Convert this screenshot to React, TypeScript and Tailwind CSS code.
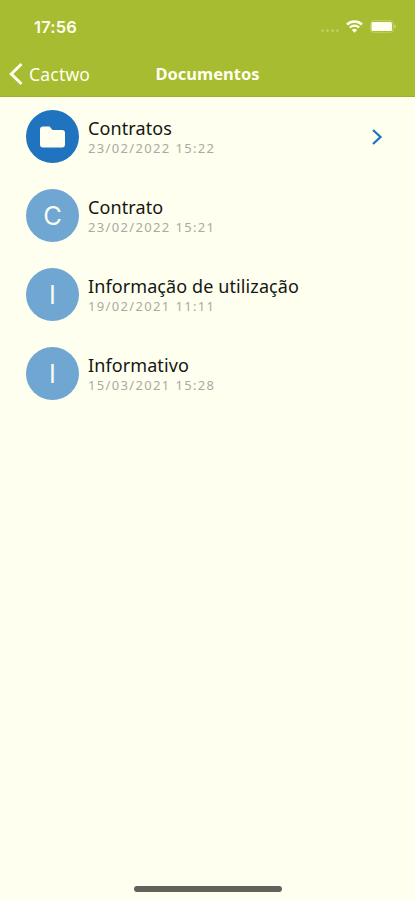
const documents = [
  { title: "Contratos", date: "23/02/2022 15:22", folder: true },
  { title: "Contrato", date: "23/02/2022 15:21", folder: false },
  { title: "Informação de utilização", date: "19/02/2021 11:11", folder: false },
  { title: "Informativo", date: "15/03/2021 15:28", folder: false },
];

function StatusBar() {
  return (
    <div className="flex h-[53px] items-center justify-between pl-[34px] pr-[18px] pt-px">
      <span className="font-['Inter',sans-serif] text-[16.5px] font-semibold leading-none tracking-[0.2px]">
        17:56
      </span>
      <div className="flex items-center pb-px">
        <div className="mr-[7px] mt-2 flex gap-[2px] opacity-25">
          <span className="h-[3px] w-[3px] rounded-full bg-[#fffff0]" />
          <span className="h-[3px] w-[3px] rounded-full bg-[#fffff0]" />
          <span className="h-[3px] w-[3px] rounded-full bg-[#fffff0]" />
          <span className="h-[3px] w-[3px] rounded-full bg-[#fffff0]" />
        </div>
        <svg width="17" height="13" viewBox="0 0 17 13" fill="none">
          <path d="M1 4.5a10.8 10.8 0 0 1 15 0" stroke="#fffff0" strokeWidth="2.6" />
          <path d="M3.8 7.5a6.8 6.8 0 0 1 9.4 0" stroke="#fffff0" strokeWidth="2.2" />
          <path d="M5.9 9.9a3.8 3.8 0 0 1 5.2 0L8.5 12.7Z" fill="#fffff0" />
        </svg>
        <svg className="ml-[7px]" width="27" height="13" viewBox="0 0 27 13" fill="none">
          <rect x="0.7" y="0.7" width="22.6" height="11.6" rx="3" stroke="#fffff0" strokeOpacity="0.3" />
          <rect x="1.5" y="2" width="20.5" height="9" rx="1.5" fill="#fffff0" />
          <path d="M24.5 4.5c2 .8 2 3.200 0 4Z" fill="#fffff0" fillOpacity="0.45" />
        </svg>
      </div>
    </div>
  );
}

export default function App() {
  return (
    <main className="flex h-[900px] w-[415px] flex-col overflow-hidden bg-[#fffff0] font-['Noto_Sans',sans-serif]">
      <header className="h-[97px] border-b border-[#9cb126] bg-[#a7bc30] text-[#fffff0]">
        <StatusBar />
        <nav className="grid h-[42px] grid-cols-[135px_145px_135px] items-center">
          <button className="flex items-center pl-[9px]">
            <svg width="14" height="24" viewBox="0 0 14 24" fill="none">
              <path d="M12.500 2 2.300 12l10.200 10" stroke="currentColor" strokeWidth="3" />
            </svg>
            <span className="ml-[6px] text-[17.5px] leading-6 tracking-[0.2px]">Cactwo</span>
          </button>
          <h1 className="text-center text-[16.5px] font-bold leading-6">Documentos</h1>
        </nav>
      </header>
      <ul className="flex-1">
        {documents.map((doc) => (
          <li key={doc.title} className="flex h-[79px] items-center pl-[26px] pr-[32px]">
            <div
              className={
                doc.folder
                  ? "flex size-[53px] items-center justify-center rounded-full bg-[#2074bf]"
                  : "flex size-[53px] items-center justify-center rounded-full bg-[#70a6d2]"
              }
            >
              {doc.folder ? (
                <svg width="25" height="22" viewBox="0 0 25 22" fill="#fffff0">
                  <path d="M3 .5h6.500L12.500 4H22a3 3 0 0 1 3 3v11.500a3 3 0 0 1-3 3H3a3 3 0 0 1-3-3v-15a3 3 0 0 1 3-3Z" />
                </svg>
              ) : (
                <span className="font-['Inter',sans-serif] text-[25.5px] leading-none text-[#f8fbef]">
                  {doc.title[0]}
                </span>
              )}
            </div>
            <div className="ml-[9px] flex flex-col">
              <span className="text-[18px] leading-[22px] tracking-[0.1px] text-[#161613]">
                {doc.title}
              </span>
              <span className="text-[13px] leading-[18px] tracking-[1.35px] text-[#aaaaa2]">
                {doc.date}
              </span>
            </div>
            {doc.folder && (
              <svg className="ml-auto" width="12" height="18" viewBox="0 0 12 18" fill="none">
                <path d="m2 2 7.500 7L2 16" stroke="#2074bf" strokeWidth="2.3" />
              </svg>
            )}
          </li>
        ))}
      </ul>
      <div className="mx-auto mb-[8px] h-[6px] w-[148px] rounded-full bg-[#62625b]" />
    </main>
  );
}
